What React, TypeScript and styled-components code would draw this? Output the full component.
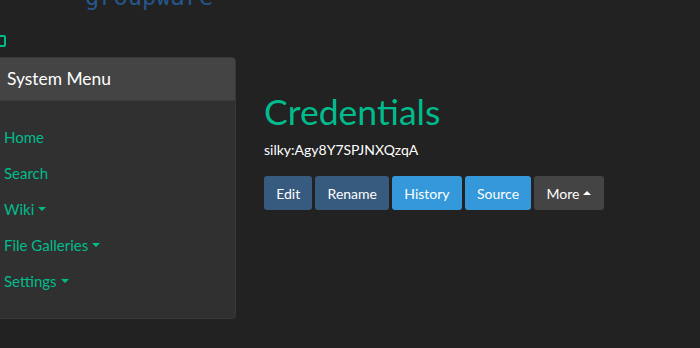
import React from "react";
import styled, { createGlobalStyle } from "styled-components";

const Global = createGlobalStyle`
  html, body { margin: 0; padding: 0; background: #222222; }
  body { font-family: Lato, "Open Sans", sans-serif; font-size: 15px; color: #ffffff; overflow: hidden; }
  * { box-sizing: border-box; }
`;

const Page = styled.div`
  width: 700px;
  height: 348px;
  display: flex;
  flex-direction: column;
  overflow: hidden;
`;

const TopBar = styled.div`
  height: 29px;
  display: flex;
  align-items: flex-start;
  padding-left: 85px;
`;

const Logo = styled.div`
  margin-top: -15px;
  font-family: "DejaVu Sans Mono", "Liberation Mono", monospace;
  font-size: 23.7px;
  line-height: 24px;
  color: #27568a;
`;

const ToggleRow = styled.div`
  height: 28px;
  display: flex;
  align-items: flex-start;
  padding-top: 6px;
`;

const Toggle = styled.div`
  width: 9px;
  height: 12px;
  margin-left: -3px;
  border: 2px solid #00bc8c;
  border-radius: 2px;
`;

const Main = styled.div`
  display: flex;
  align-items: flex-start;
`;

const Panel = styled.div`
  width: 250px;
  margin-left: -14px;
  background: #303030;
  border: 1px solid #383838;
  border-radius: 4px;
  height: 262px;
  display: flex;
  flex-direction: column;
  overflow: hidden;
`;

const PanelHeader = styled.div`
  height: 43px;
  background: #444444;
  border-bottom: 1px solid #3a3a3a;
  display: flex;
  align-items: center;
  padding-left: 20px;
  padding-bottom: 2px;
  font-size: 17.4px;
  color: #ffffff;
`;

const MenuList = styled.div`
  display: flex;
  flex-direction: column;
  padding-top: 18px;
  padding-left: 17px;
`;

const MenuItem = styled.div`
  height: 36px;
  display: flex;
  align-items: center;
  gap: 4px;
  color: #00bc8c;
  font-size: 15px;
`;

const Caret = styled.span<{ $up?: boolean }>`
  display: inline-block;
  width: 0;
  height: 0;
  border-left: 4px solid transparent;
  border-right: 4px solid transparent;
  ${(p) => (p.$up ? "border-bottom: 4px solid currentColor;" : "border-top: 4px solid currentColor;")}
`;

const Content = styled.div`
  margin-left: 28px;
  padding-top: 33px;
  display: flex;
  flex-direction: column;
`;

const Title = styled.h1`
  margin: 0;
  font-family: Lato, sans-serif;
  font-weight: 400;
  font-size: 35.6px;
  line-height: 44px;
  color: #00bc8c;
`;

const Subtitle = styled.div`
  margin-top: 6px;
  font-size: 14px;
  line-height: 20px;
  color: #ffffff;
`;

const ButtonRow = styled.div`
  display: flex;
  gap: 3px;
  margin-top: 16px;
`;

const Button = styled.div<{ $variant: "primary" | "info" | "secondary" }>`
  height: 34px;
  display: flex;
  align-items: center;
  gap: 4px;
  padding: 0 12.2px;
  border-radius: 3px;
  font-size: 14px;
  color: #ffffff;
  background: ${(p) =>
    p.$variant === "primary" ? "#375a7f" : p.$variant === "info" ? "#3498db" : "#444444"};
`;

export default function App() {
  return (
    <Page>
      <Global />
      <TopBar>
        <Logo>groupware</Logo>
      </TopBar>
      <ToggleRow>
        <Toggle />
      </ToggleRow>
      <Main>
        <Panel>
          <PanelHeader>System Menu</PanelHeader>
          <MenuList>
            <MenuItem>Home</MenuItem>
            <MenuItem>Search</MenuItem>
            <MenuItem>Wiki <Caret /></MenuItem>
            <MenuItem>File Galleries <Caret /></MenuItem>
            <MenuItem>Settings <Caret /></MenuItem>
          </MenuList>
        </Panel>
        <Content>
          <Title>Credentials</Title>
          <Subtitle>silky:Agy8Y7SPJNXQzqA</Subtitle>
          <ButtonRow>
            <Button $variant="primary">Edit</Button>
            <Button $variant="primary">Rename</Button>
            <Button $variant="info">History</Button>
            <Button $variant="info">Source</Button>
            <Button $variant="secondary">More <Caret $up /></Button>
          </ButtonRow>
        </Content>
      </Main>
    </Page>
  );
}
